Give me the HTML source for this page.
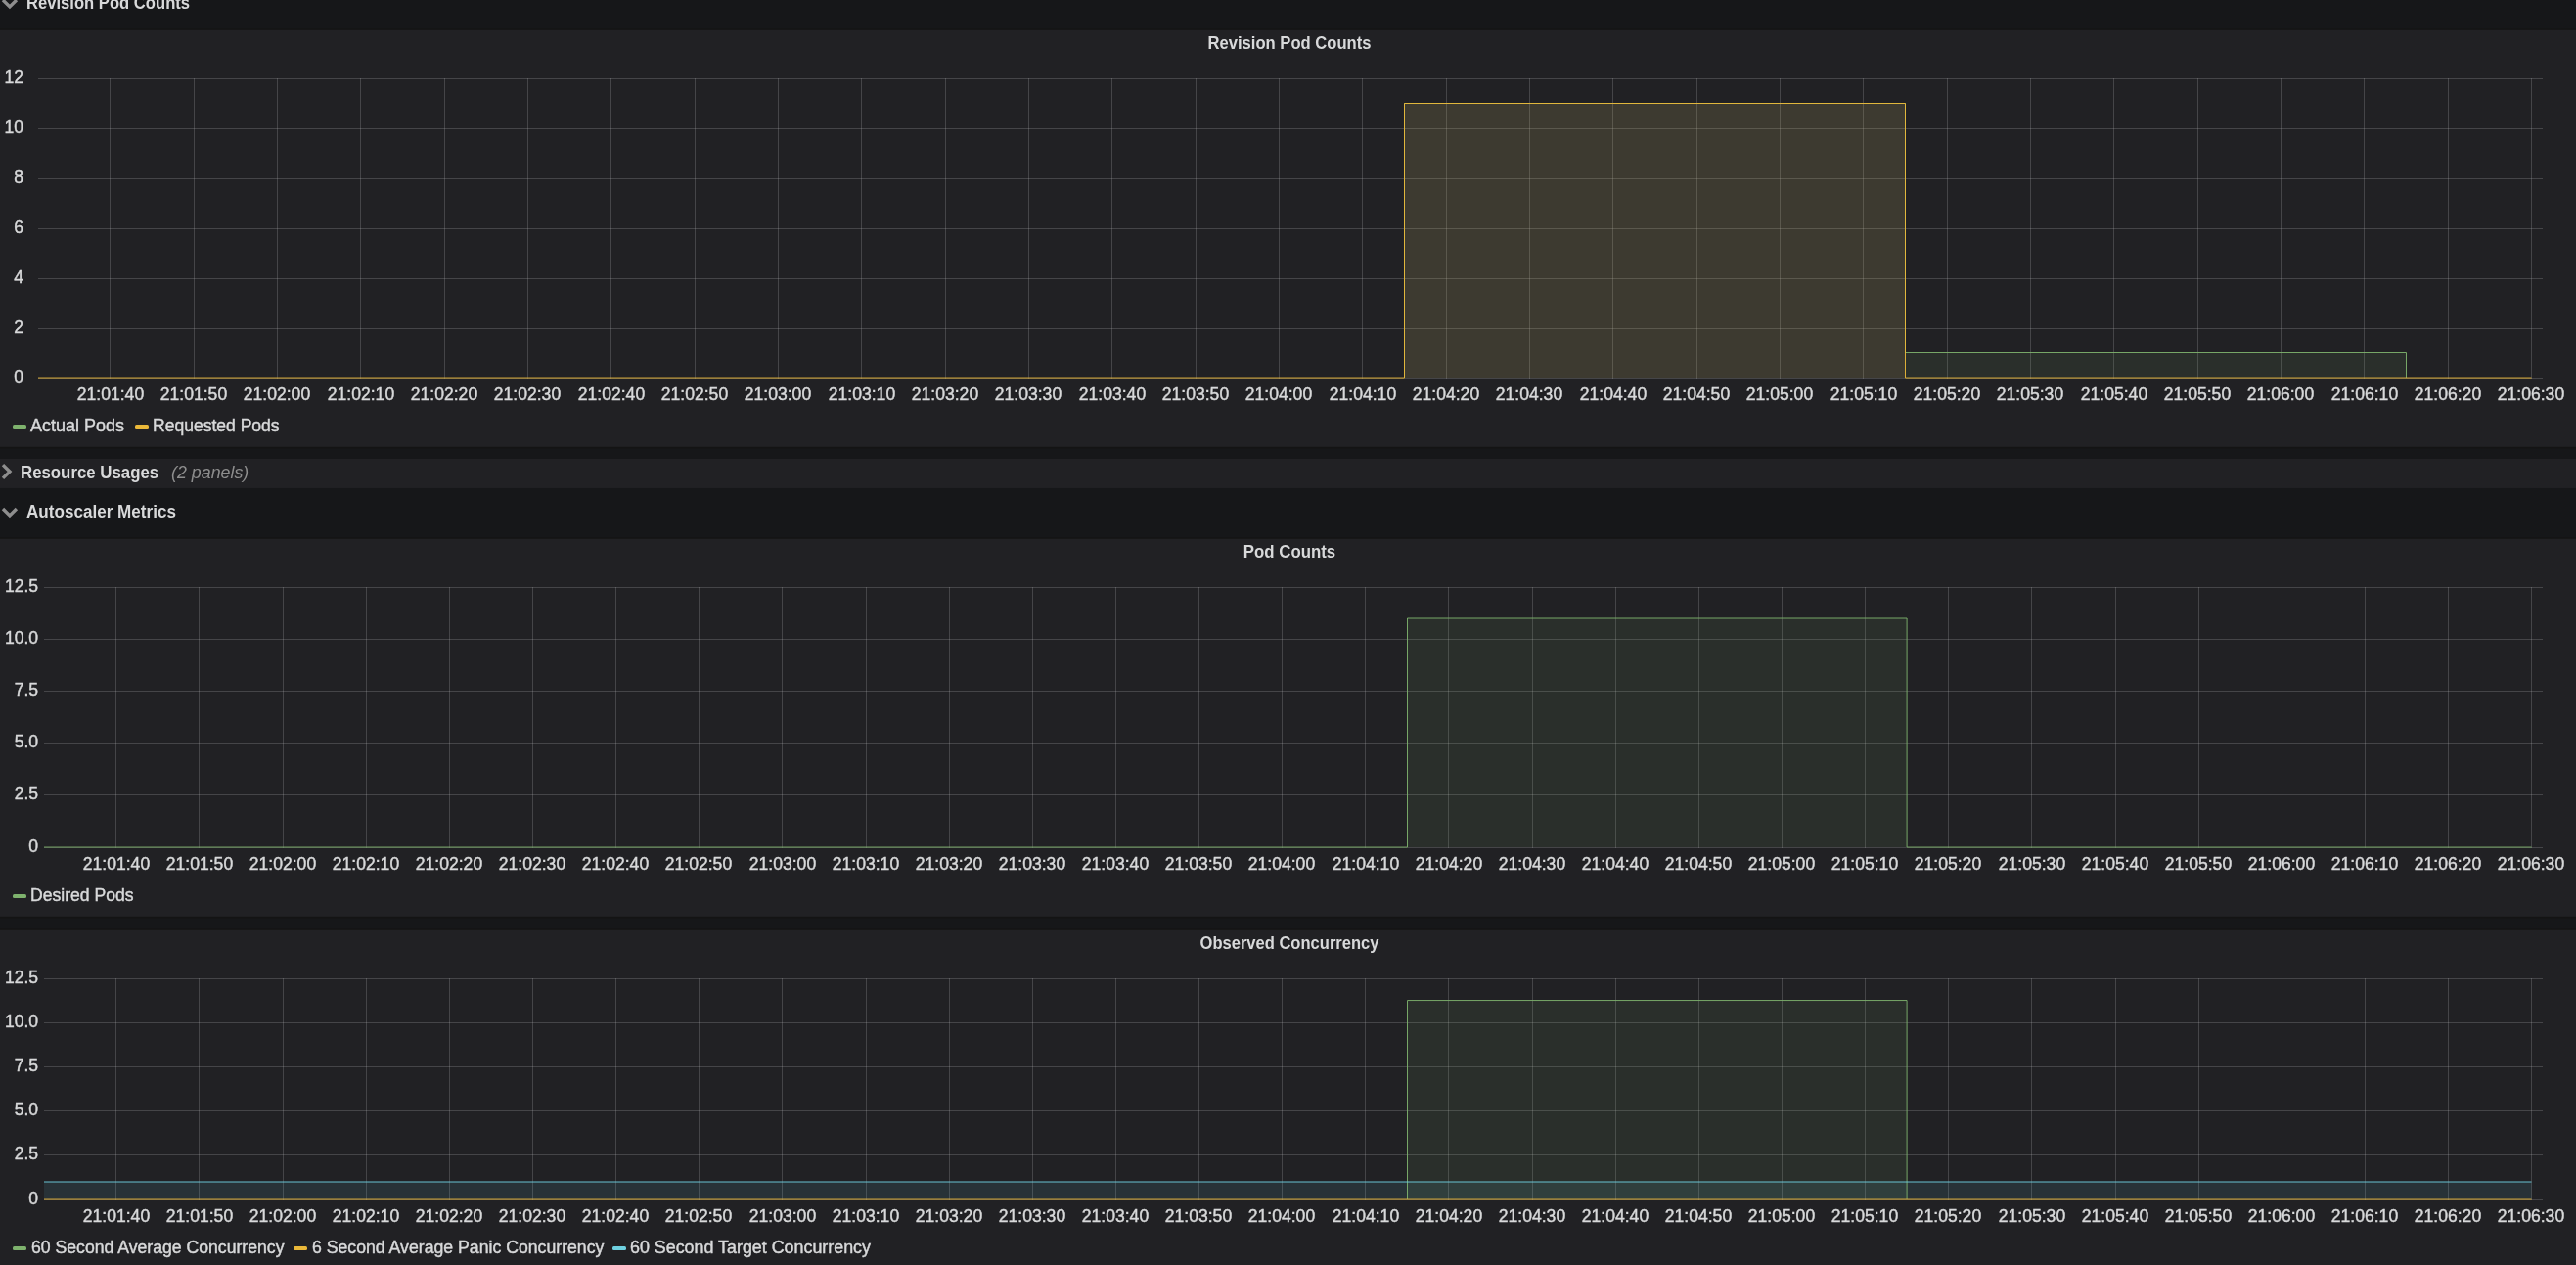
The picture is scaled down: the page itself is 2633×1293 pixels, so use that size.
<!DOCTYPE html>
<html lang="en"><head><meta charset="utf-8"><title>Knative Serving - Scaling Debugging</title>
<style>
html,body{margin:0;padding:0;background:#161719;}
html{width:2633px;height:1293px;overflow:hidden;}
body{width:2633px;height:1293px;position:relative;overflow:hidden;font-family:"Liberation Sans",sans-serif;font-size:18px;color:#d8d9da;}
.panel{position:absolute;left:0;width:2633px;background:#212124;}
.t{position:absolute;white-space:nowrap;line-height:18px;height:18px;}
#txt{position:absolute;left:0;top:0;width:2633px;height:1293px;will-change:transform;overflow:hidden;}
.n{-webkit-text-stroke:0.45px #d8d9da;}
.b{font-weight:bold;}
.i{font-style:italic;}
.ch{position:absolute;left:0;top:0;}
.dash{position:absolute;width:14px;height:4px;border-radius:1.5px;}
.ic{position:absolute;left:0;}
</style></head><body>
<svg class="ch" width="2633" height="1293" viewBox="0 0 2633 1293"><rect x="-2" y="29.40" width="2637" height="429.05" fill="#141414"/><rect x="-2" y="30.80" width="2637" height="426.05" fill="#212124"/><rect x="-2" y="469.00" width="2637" height="29.95" fill="#212124"/><rect x="-2" y="549.30" width="2637" height="389.15" fill="#141414"/><rect x="-2" y="550.70" width="2637" height="386.15" fill="#212124"/><rect x="-2" y="949.30" width="2637" height="352.30" fill="#141414"/><rect x="-2" y="950.70" width="2637" height="349.30" fill="#212124"/></svg>
<svg class="ic" style="top:0" width="24" height="1293" viewBox="0 0 24 1293"><polyline points="2.98,0.00 9.94,6.90 16.9,0.00" fill="none" stroke="#8e8e8e" stroke-width="3.4" stroke-linejoin="miter"/></svg>
<svg class="ic" style="top:0" width="24" height="1293" viewBox="0 0 24 1293"><polyline points="2.98,475.10 9.97,482.00 2.98,488.90" fill="none" stroke="#8e8e8e" stroke-width="3.4" stroke-linejoin="miter"/></svg>
<svg class="ic" style="top:0" width="24" height="1293" viewBox="0 0 24 1293"><polyline points="2.98,520.00 9.94,526.90 16.9,520.00" fill="none" stroke="#8e8e8e" stroke-width="3.4" stroke-linejoin="miter"/></svg>
<svg class="ch" width="2633" height="1293" viewBox="0 0 2633 1293">
<g stroke="rgba(200,200,200,0.22)" stroke-width="1" shape-rendering="crispEdges"><line x1="39" x2="2599" y1="80.5" y2="80.5"/><line x1="39" x2="2599" y1="131.5" y2="131.5"/><line x1="39" x2="2599" y1="182.5" y2="182.5"/><line x1="39" x2="2599" y1="233.5" y2="233.5"/><line x1="39" x2="2599" y1="284.5" y2="284.5"/><line x1="39" x2="2599" y1="335.5" y2="335.5"/><line x1="39" x2="2599" y1="386.5" y2="386.5"/><line x1="112.5" x2="112.5" y1="80" y2="387"/><line x1="198.5" x2="198.5" y1="80" y2="387"/><line x1="283.5" x2="283.5" y1="80" y2="387"/><line x1="368.5" x2="368.5" y1="80" y2="387"/><line x1="454.5" x2="454.5" y1="80" y2="387"/><line x1="539.5" x2="539.5" y1="80" y2="387"/><line x1="624.5" x2="624.5" y1="80" y2="387"/><line x1="710.5" x2="710.5" y1="80" y2="387"/><line x1="795.5" x2="795.5" y1="80" y2="387"/><line x1="880.5" x2="880.5" y1="80" y2="387"/><line x1="966.5" x2="966.5" y1="80" y2="387"/><line x1="1051.5" x2="1051.5" y1="80" y2="387"/><line x1="1136.5" x2="1136.5" y1="80" y2="387"/><line x1="1222.5" x2="1222.5" y1="80" y2="387"/><line x1="1307.5" x2="1307.5" y1="80" y2="387"/><line x1="1392.5" x2="1392.5" y1="80" y2="387"/><line x1="1478.5" x2="1478.5" y1="80" y2="387"/><line x1="1563.5" x2="1563.5" y1="80" y2="387"/><line x1="1648.5" x2="1648.5" y1="80" y2="387"/><line x1="1734.5" x2="1734.5" y1="80" y2="387"/><line x1="1819.5" x2="1819.5" y1="80" y2="387"/><line x1="1904.5" x2="1904.5" y1="80" y2="387"/><line x1="1990.5" x2="1990.5" y1="80" y2="387"/><line x1="2075.5" x2="2075.5" y1="80" y2="387"/><line x1="2160.5" x2="2160.5" y1="80" y2="387"/><line x1="2246.5" x2="2246.5" y1="80" y2="387"/><line x1="2331.5" x2="2331.5" y1="80" y2="387"/><line x1="2416.5" x2="2416.5" y1="80" y2="387"/><line x1="2502.5" x2="2502.5" y1="80" y2="387"/><line x1="2587.5" x2="2587.5" y1="80" y2="387"/></g>
<rect x="1435.5" y="105.5" width="512.0" height="280.55" fill="rgb(186,170,99)" fill-opacity="0.19"/><rect x="1947.5" y="360.5" width="512.0" height="25.55" fill="#7eb26d" fill-opacity="0.1"/><path d="M1435.50 386.05 L1435.50 105.50 L1947.50 105.50 L1947.50 360.50 L2459.50 360.50 L2459.50 386.05" fill="none" stroke="#7eb26d" stroke-width="1.0" stroke-opacity="0.93" stroke-linejoin="miter"/><path d="M39.00 386.05 L1435.50 386.05 L1435.50 105.50 L1947.50 105.50 L1947.50 386.05 L2587.50 386.05" fill="none" stroke="#eab839" stroke-width="1.0" stroke-opacity="0.93" stroke-linejoin="miter"/>
</svg>
<div class="dash" style="left:13.00px;top:433.80px;background:#7eb26d"></div>
<div class="dash" style="left:137.50px;top:433.80px;background:#eab839"></div>
<svg class="ch" width="2633" height="1293" viewBox="0 0 2633 1293">
<g stroke="rgba(200,200,200,0.22)" stroke-width="1" shape-rendering="crispEdges"><line x1="45" x2="2599" y1="600.5" y2="600.5"/><line x1="45" x2="2599" y1="653.5" y2="653.5"/><line x1="45" x2="2599" y1="706.5" y2="706.5"/><line x1="45" x2="2599" y1="759.5" y2="759.5"/><line x1="45" x2="2599" y1="812.5" y2="812.5"/><line x1="45" x2="2599" y1="866.5" y2="866.5"/><line x1="118.5" x2="118.5" y1="600" y2="867"/><line x1="203.5" x2="203.5" y1="600" y2="867"/><line x1="289.5" x2="289.5" y1="600" y2="867"/><line x1="374.5" x2="374.5" y1="600" y2="867"/><line x1="459.5" x2="459.5" y1="600" y2="867"/><line x1="544.5" x2="544.5" y1="600" y2="867"/><line x1="629.5" x2="629.5" y1="600" y2="867"/><line x1="714.5" x2="714.5" y1="600" y2="867"/><line x1="799.5" x2="799.5" y1="600" y2="867"/><line x1="885.5" x2="885.5" y1="600" y2="867"/><line x1="970.5" x2="970.5" y1="600" y2="867"/><line x1="1055.5" x2="1055.5" y1="600" y2="867"/><line x1="1140.5" x2="1140.5" y1="600" y2="867"/><line x1="1225.5" x2="1225.5" y1="600" y2="867"/><line x1="1310.5" x2="1310.5" y1="600" y2="867"/><line x1="1395.5" x2="1395.5" y1="600" y2="867"/><line x1="1480.5" x2="1480.5" y1="600" y2="867"/><line x1="1566.5" x2="1566.5" y1="600" y2="867"/><line x1="1651.5" x2="1651.5" y1="600" y2="867"/><line x1="1736.5" x2="1736.5" y1="600" y2="867"/><line x1="1821.5" x2="1821.5" y1="600" y2="867"/><line x1="1906.5" x2="1906.5" y1="600" y2="867"/><line x1="1991.5" x2="1991.5" y1="600" y2="867"/><line x1="2076.5" x2="2076.5" y1="600" y2="867"/><line x1="2162.5" x2="2162.5" y1="600" y2="867"/><line x1="2247.5" x2="2247.5" y1="600" y2="867"/><line x1="2332.5" x2="2332.5" y1="600" y2="867"/><line x1="2417.5" x2="2417.5" y1="600" y2="867"/><line x1="2502.5" x2="2502.5" y1="600" y2="867"/><line x1="2587.5" x2="2587.5" y1="600" y2="867"/></g>
<path d="M45.00 866.05 L1438.50 866.05 L1438.50 632.00 L1949.10 632.00 L1949.10 866.05 L2587.50 866.05 L2587.50 866.05 L45.00 866.05 Z" fill="#7eb26d" fill-opacity="0.1" stroke="none"/><path d="M45.00 866.05 L1438.50 866.05 L1438.50 632.00 L1949.10 632.00 L1949.10 866.05 L2587.50 866.05" fill="none" stroke="#7eb26d" stroke-width="1.0" stroke-opacity="0.93" stroke-linejoin="miter"/>
</svg>
<div class="dash" style="left:13.00px;top:913.80px;background:#7eb26d"></div>
<svg class="ch" width="2633" height="1293" viewBox="0 0 2633 1293">
<g stroke="rgba(200,200,200,0.22)" stroke-width="1" shape-rendering="crispEdges"><line x1="45" x2="2599" y1="1000.5" y2="1000.5"/><line x1="45" x2="2599" y1="1045.5" y2="1045.5"/><line x1="45" x2="2599" y1="1090.5" y2="1090.5"/><line x1="45" x2="2599" y1="1135.5" y2="1135.5"/><line x1="45" x2="2599" y1="1180.5" y2="1180.5"/><line x1="45" x2="2599" y1="1226.5" y2="1226.5"/><line x1="118.5" x2="118.5" y1="1000" y2="1227"/><line x1="203.5" x2="203.5" y1="1000" y2="1227"/><line x1="289.5" x2="289.5" y1="1000" y2="1227"/><line x1="374.5" x2="374.5" y1="1000" y2="1227"/><line x1="459.5" x2="459.5" y1="1000" y2="1227"/><line x1="544.5" x2="544.5" y1="1000" y2="1227"/><line x1="629.5" x2="629.5" y1="1000" y2="1227"/><line x1="714.5" x2="714.5" y1="1000" y2="1227"/><line x1="799.5" x2="799.5" y1="1000" y2="1227"/><line x1="885.5" x2="885.5" y1="1000" y2="1227"/><line x1="970.5" x2="970.5" y1="1000" y2="1227"/><line x1="1055.5" x2="1055.5" y1="1000" y2="1227"/><line x1="1140.5" x2="1140.5" y1="1000" y2="1227"/><line x1="1225.5" x2="1225.5" y1="1000" y2="1227"/><line x1="1310.5" x2="1310.5" y1="1000" y2="1227"/><line x1="1395.5" x2="1395.5" y1="1000" y2="1227"/><line x1="1480.5" x2="1480.5" y1="1000" y2="1227"/><line x1="1566.5" x2="1566.5" y1="1000" y2="1227"/><line x1="1651.5" x2="1651.5" y1="1000" y2="1227"/><line x1="1736.5" x2="1736.5" y1="1000" y2="1227"/><line x1="1821.5" x2="1821.5" y1="1000" y2="1227"/><line x1="1906.5" x2="1906.5" y1="1000" y2="1227"/><line x1="1991.5" x2="1991.5" y1="1000" y2="1227"/><line x1="2076.5" x2="2076.5" y1="1000" y2="1227"/><line x1="2162.5" x2="2162.5" y1="1000" y2="1227"/><line x1="2247.5" x2="2247.5" y1="1000" y2="1227"/><line x1="2332.5" x2="2332.5" y1="1000" y2="1227"/><line x1="2417.5" x2="2417.5" y1="1000" y2="1227"/><line x1="2502.5" x2="2502.5" y1="1000" y2="1227"/><line x1="2587.5" x2="2587.5" y1="1000" y2="1227"/></g>
<path d="M1438.50 1226.05 L1438.50 1022.55 L1949.10 1022.55 L1949.10 1226.05 L1949.10 1226.05 L1438.50 1226.05 Z" fill="#7eb26d" fill-opacity="0.1" stroke="none"/><path d="M45.00 1208.00 L2587.50 1208.00 L2587.50 1226.05 L45.00 1226.05 Z" fill="#6ed0e0" fill-opacity="0.1" stroke="none"/><path d="M1438.50 1226.05 L1438.50 1022.55 L1949.10 1022.55 L1949.10 1226.05" fill="none" stroke="#7eb26d" stroke-width="1.0" stroke-opacity="0.93" stroke-linejoin="miter"/><path d="M45.00 1226.05 L2587.50 1226.05" fill="none" stroke="#eab839" stroke-width="1.0" stroke-opacity="0.93" stroke-linejoin="miter"/><path d="M45.00 1208.00 L2587.50 1208.00" fill="none" stroke="#6ed0e0" stroke-width="1.0" stroke-opacity="0.93" stroke-linejoin="miter"/>
</svg>
<div class="dash" style="left:13.00px;top:1273.80px;background:#7eb26d"></div>
<div class="dash" style="left:300.00px;top:1273.80px;background:#eab839"></div>
<div class="dash" style="left:626.25px;top:1273.80px;background:#6ed0e0"></div>
<div id="txt">
<div id="r1" class="t b" style="top:-6.24px;left:26.50px;transform-origin:0 0;transform:scaleX(0.9230);"><span>Revision Pod Counts</span></div>
<div id="r2" class="t b" style="top:473.56px;left:21.30px;transform-origin:0 0;transform:scaleX(0.9342);"><span>Resource Usages</span></div>
<div id="r2c" class="t i" style="top:473.56px;left:174.61px;transform-origin:0 0;transform:scaleX(0.9902);color:#8e8e8e;"><span>(2 panels)</span></div>
<div id="r3" class="t b" style="top:513.76px;left:26.73px;transform-origin:0 0;transform:scaleX(0.9496);"><span>Autoscaler Metrics</span></div>
<div id="p1" class="t b" style="top:34.76px;left:1217.88px;width:200px;text-align:center;transform:scaleX(0.9228);"><span>Revision Pod Counts</span></div>
<div id="p2" class="t b" style="top:554.76px;left:1218.25px;width:200px;text-align:center;transform:scaleX(0.9344);"><span>Pod Counts</span></div>
<div id="p3" class="t b" style="top:954.76px;left:1217.64px;width:200px;text-align:center;transform:scaleX(0.9188);"><span>Observed Concurrency</span></div>
<div class="t n" style="top:69.66px;right:2609.00px;transform-origin:100% 0;transform:scaleX(0.9750);"><span>12</span></div>
<div class="t n" style="top:120.66px;right:2609.00px;transform-origin:100% 0;transform:scaleX(0.9750);"><span>10</span></div>
<div class="t n" style="top:171.66px;right:2609.00px;transform-origin:100% 0;transform:scaleX(0.9750);"><span>8</span></div>
<div class="t n" style="top:222.66px;right:2609.00px;transform-origin:100% 0;transform:scaleX(0.9750);"><span>6</span></div>
<div class="t n" style="top:273.66px;right:2609.00px;transform-origin:100% 0;transform:scaleX(0.9750);"><span>4</span></div>
<div class="t n" style="top:324.66px;right:2609.00px;transform-origin:100% 0;transform:scaleX(0.9750);"><span>2</span></div>
<div class="t n" style="top:375.66px;right:2609.00px;transform-origin:100% 0;transform:scaleX(0.9750);"><span>0</span></div>
<div class="t n" style="top:394.16px;left:12.65px;width:200px;text-align:center;transform:scaleX(0.9750);"><span>21:01:40</span></div>
<div class="t n" style="top:394.16px;left:97.98px;width:200px;text-align:center;transform:scaleX(0.9750);"><span>21:01:50</span></div>
<div class="t n" style="top:394.16px;left:183.32px;width:200px;text-align:center;transform:scaleX(0.9750);"><span>21:02:00</span></div>
<div class="t n" style="top:394.16px;left:268.65px;width:200px;text-align:center;transform:scaleX(0.9750);"><span>21:02:10</span></div>
<div class="t n" style="top:394.16px;left:353.98px;width:200px;text-align:center;transform:scaleX(0.9750);"><span>21:02:20</span></div>
<div class="t n" style="top:394.16px;left:439.32px;width:200px;text-align:center;transform:scaleX(0.9750);"><span>21:02:30</span></div>
<div class="t n" style="top:394.16px;left:524.65px;width:200px;text-align:center;transform:scaleX(0.9750);"><span>21:02:40</span></div>
<div class="t n" style="top:394.16px;left:609.98px;width:200px;text-align:center;transform:scaleX(0.9750);"><span>21:02:50</span></div>
<div class="t n" style="top:394.16px;left:695.32px;width:200px;text-align:center;transform:scaleX(0.9750);"><span>21:03:00</span></div>
<div class="t n" style="top:394.16px;left:780.65px;width:200px;text-align:center;transform:scaleX(0.9750);"><span>21:03:10</span></div>
<div class="t n" style="top:394.16px;left:865.98px;width:200px;text-align:center;transform:scaleX(0.9750);"><span>21:03:20</span></div>
<div class="t n" style="top:394.16px;left:951.32px;width:200px;text-align:center;transform:scaleX(0.9750);"><span>21:03:30</span></div>
<div class="t n" style="top:394.16px;left:1036.65px;width:200px;text-align:center;transform:scaleX(0.9750);"><span>21:03:40</span></div>
<div class="t n" style="top:394.16px;left:1121.98px;width:200px;text-align:center;transform:scaleX(0.9750);"><span>21:03:50</span></div>
<div class="t n" style="top:394.16px;left:1207.32px;width:200px;text-align:center;transform:scaleX(0.9750);"><span>21:04:00</span></div>
<div class="t n" style="top:394.16px;left:1292.65px;width:200px;text-align:center;transform:scaleX(0.9750);"><span>21:04:10</span></div>
<div class="t n" style="top:394.16px;left:1377.98px;width:200px;text-align:center;transform:scaleX(0.9750);"><span>21:04:20</span></div>
<div class="t n" style="top:394.16px;left:1463.32px;width:200px;text-align:center;transform:scaleX(0.9750);"><span>21:04:30</span></div>
<div class="t n" style="top:394.16px;left:1548.65px;width:200px;text-align:center;transform:scaleX(0.9750);"><span>21:04:40</span></div>
<div class="t n" style="top:394.16px;left:1633.98px;width:200px;text-align:center;transform:scaleX(0.9750);"><span>21:04:50</span></div>
<div class="t n" style="top:394.16px;left:1719.32px;width:200px;text-align:center;transform:scaleX(0.9750);"><span>21:05:00</span></div>
<div class="t n" style="top:394.16px;left:1804.65px;width:200px;text-align:center;transform:scaleX(0.9750);"><span>21:05:10</span></div>
<div class="t n" style="top:394.16px;left:1889.98px;width:200px;text-align:center;transform:scaleX(0.9750);"><span>21:05:20</span></div>
<div class="t n" style="top:394.16px;left:1975.32px;width:200px;text-align:center;transform:scaleX(0.9750);"><span>21:05:30</span></div>
<div class="t n" style="top:394.16px;left:2060.65px;width:200px;text-align:center;transform:scaleX(0.9750);"><span>21:05:40</span></div>
<div class="t n" style="top:394.16px;left:2145.98px;width:200px;text-align:center;transform:scaleX(0.9750);"><span>21:05:50</span></div>
<div class="t n" style="top:394.16px;left:2231.32px;width:200px;text-align:center;transform:scaleX(0.9750);"><span>21:06:00</span></div>
<div class="t n" style="top:394.16px;left:2316.65px;width:200px;text-align:center;transform:scaleX(0.9750);"><span>21:06:10</span></div>
<div class="t n" style="top:394.16px;left:2401.98px;width:200px;text-align:center;transform:scaleX(0.9750);"><span>21:06:20</span></div>
<div class="t n" style="top:394.16px;left:2487.32px;width:200px;text-align:center;transform:scaleX(0.9750);"><span>21:06:30</span></div>
<div id="lg1_0" class="t n" style="top:425.96px;left:31.25px;transform-origin:0 0;transform:scaleX(0.9980);"><span>Actual Pods</span></div>
<div id="lg1_1" class="t n" style="top:425.96px;left:156.35px;transform-origin:0 0;transform:scaleX(0.9738);"><span>Requested Pods</span></div>
<div class="t n" style="top:589.66px;right:2594.40px;transform-origin:100% 0;transform:scaleX(0.9750);"><span>12.5</span></div>
<div class="t n" style="top:642.86px;right:2594.40px;transform-origin:100% 0;transform:scaleX(0.9750);"><span>10.0</span></div>
<div class="t n" style="top:696.06px;right:2594.40px;transform-origin:100% 0;transform:scaleX(0.9750);"><span>7.5</span></div>
<div class="t n" style="top:749.26px;right:2594.40px;transform-origin:100% 0;transform:scaleX(0.9750);"><span>5.0</span></div>
<div class="t n" style="top:802.46px;right:2594.40px;transform-origin:100% 0;transform:scaleX(0.9750);"><span>2.5</span></div>
<div class="t n" style="top:855.66px;right:2594.40px;transform-origin:100% 0;transform:scaleX(0.9750);"><span>0</span></div>
<div class="t n" style="top:874.16px;left:18.50px;width:200px;text-align:center;transform:scaleX(0.9750);"><span>21:01:40</span></div>
<div class="t n" style="top:874.16px;left:103.63px;width:200px;text-align:center;transform:scaleX(0.9750);"><span>21:01:50</span></div>
<div class="t n" style="top:874.16px;left:188.77px;width:200px;text-align:center;transform:scaleX(0.9750);"><span>21:02:00</span></div>
<div class="t n" style="top:874.16px;left:273.90px;width:200px;text-align:center;transform:scaleX(0.9750);"><span>21:02:10</span></div>
<div class="t n" style="top:874.16px;left:359.03px;width:200px;text-align:center;transform:scaleX(0.9750);"><span>21:02:20</span></div>
<div class="t n" style="top:874.16px;left:444.17px;width:200px;text-align:center;transform:scaleX(0.9750);"><span>21:02:30</span></div>
<div class="t n" style="top:874.16px;left:529.30px;width:200px;text-align:center;transform:scaleX(0.9750);"><span>21:02:40</span></div>
<div class="t n" style="top:874.16px;left:614.43px;width:200px;text-align:center;transform:scaleX(0.9750);"><span>21:02:50</span></div>
<div class="t n" style="top:874.16px;left:699.57px;width:200px;text-align:center;transform:scaleX(0.9750);"><span>21:03:00</span></div>
<div class="t n" style="top:874.16px;left:784.70px;width:200px;text-align:center;transform:scaleX(0.9750);"><span>21:03:10</span></div>
<div class="t n" style="top:874.16px;left:869.83px;width:200px;text-align:center;transform:scaleX(0.9750);"><span>21:03:20</span></div>
<div class="t n" style="top:874.16px;left:954.97px;width:200px;text-align:center;transform:scaleX(0.9750);"><span>21:03:30</span></div>
<div class="t n" style="top:874.16px;left:1040.10px;width:200px;text-align:center;transform:scaleX(0.9750);"><span>21:03:40</span></div>
<div class="t n" style="top:874.16px;left:1125.23px;width:200px;text-align:center;transform:scaleX(0.9750);"><span>21:03:50</span></div>
<div class="t n" style="top:874.16px;left:1210.37px;width:200px;text-align:center;transform:scaleX(0.9750);"><span>21:04:00</span></div>
<div class="t n" style="top:874.16px;left:1295.50px;width:200px;text-align:center;transform:scaleX(0.9750);"><span>21:04:10</span></div>
<div class="t n" style="top:874.16px;left:1380.63px;width:200px;text-align:center;transform:scaleX(0.9750);"><span>21:04:20</span></div>
<div class="t n" style="top:874.16px;left:1465.77px;width:200px;text-align:center;transform:scaleX(0.9750);"><span>21:04:30</span></div>
<div class="t n" style="top:874.16px;left:1550.90px;width:200px;text-align:center;transform:scaleX(0.9750);"><span>21:04:40</span></div>
<div class="t n" style="top:874.16px;left:1636.03px;width:200px;text-align:center;transform:scaleX(0.9750);"><span>21:04:50</span></div>
<div class="t n" style="top:874.16px;left:1721.17px;width:200px;text-align:center;transform:scaleX(0.9750);"><span>21:05:00</span></div>
<div class="t n" style="top:874.16px;left:1806.30px;width:200px;text-align:center;transform:scaleX(0.9750);"><span>21:05:10</span></div>
<div class="t n" style="top:874.16px;left:1891.43px;width:200px;text-align:center;transform:scaleX(0.9750);"><span>21:05:20</span></div>
<div class="t n" style="top:874.16px;left:1976.57px;width:200px;text-align:center;transform:scaleX(0.9750);"><span>21:05:30</span></div>
<div class="t n" style="top:874.16px;left:2061.70px;width:200px;text-align:center;transform:scaleX(0.9750);"><span>21:05:40</span></div>
<div class="t n" style="top:874.16px;left:2146.83px;width:200px;text-align:center;transform:scaleX(0.9750);"><span>21:05:50</span></div>
<div class="t n" style="top:874.16px;left:2231.97px;width:200px;text-align:center;transform:scaleX(0.9750);"><span>21:06:00</span></div>
<div class="t n" style="top:874.16px;left:2317.10px;width:200px;text-align:center;transform:scaleX(0.9750);"><span>21:06:10</span></div>
<div class="t n" style="top:874.16px;left:2402.23px;width:200px;text-align:center;transform:scaleX(0.9750);"><span>21:06:20</span></div>
<div class="t n" style="top:874.16px;left:2487.37px;width:200px;text-align:center;transform:scaleX(0.9750);"><span>21:06:30</span></div>
<div id="lg2_0" class="t n" style="top:905.96px;left:31.35px;transform-origin:0 0;transform:scaleX(0.9760);"><span>Desired Pods</span></div>
<div class="t n" style="top:989.66px;right:2594.40px;transform-origin:100% 0;transform:scaleX(0.9750);"><span>12.5</span></div>
<div class="t n" style="top:1034.86px;right:2594.40px;transform-origin:100% 0;transform:scaleX(0.9750);"><span>10.0</span></div>
<div class="t n" style="top:1080.06px;right:2594.40px;transform-origin:100% 0;transform:scaleX(0.9750);"><span>7.5</span></div>
<div class="t n" style="top:1125.26px;right:2594.40px;transform-origin:100% 0;transform:scaleX(0.9750);"><span>5.0</span></div>
<div class="t n" style="top:1170.46px;right:2594.40px;transform-origin:100% 0;transform:scaleX(0.9750);"><span>2.5</span></div>
<div class="t n" style="top:1215.66px;right:2594.40px;transform-origin:100% 0;transform:scaleX(0.9750);"><span>0</span></div>
<div class="t n" style="top:1234.16px;left:18.50px;width:200px;text-align:center;transform:scaleX(0.9750);"><span>21:01:40</span></div>
<div class="t n" style="top:1234.16px;left:103.63px;width:200px;text-align:center;transform:scaleX(0.9750);"><span>21:01:50</span></div>
<div class="t n" style="top:1234.16px;left:188.77px;width:200px;text-align:center;transform:scaleX(0.9750);"><span>21:02:00</span></div>
<div class="t n" style="top:1234.16px;left:273.90px;width:200px;text-align:center;transform:scaleX(0.9750);"><span>21:02:10</span></div>
<div class="t n" style="top:1234.16px;left:359.03px;width:200px;text-align:center;transform:scaleX(0.9750);"><span>21:02:20</span></div>
<div class="t n" style="top:1234.16px;left:444.17px;width:200px;text-align:center;transform:scaleX(0.9750);"><span>21:02:30</span></div>
<div class="t n" style="top:1234.16px;left:529.30px;width:200px;text-align:center;transform:scaleX(0.9750);"><span>21:02:40</span></div>
<div class="t n" style="top:1234.16px;left:614.43px;width:200px;text-align:center;transform:scaleX(0.9750);"><span>21:02:50</span></div>
<div class="t n" style="top:1234.16px;left:699.57px;width:200px;text-align:center;transform:scaleX(0.9750);"><span>21:03:00</span></div>
<div class="t n" style="top:1234.16px;left:784.70px;width:200px;text-align:center;transform:scaleX(0.9750);"><span>21:03:10</span></div>
<div class="t n" style="top:1234.16px;left:869.83px;width:200px;text-align:center;transform:scaleX(0.9750);"><span>21:03:20</span></div>
<div class="t n" style="top:1234.16px;left:954.97px;width:200px;text-align:center;transform:scaleX(0.9750);"><span>21:03:30</span></div>
<div class="t n" style="top:1234.16px;left:1040.10px;width:200px;text-align:center;transform:scaleX(0.9750);"><span>21:03:40</span></div>
<div class="t n" style="top:1234.16px;left:1125.23px;width:200px;text-align:center;transform:scaleX(0.9750);"><span>21:03:50</span></div>
<div class="t n" style="top:1234.16px;left:1210.37px;width:200px;text-align:center;transform:scaleX(0.9750);"><span>21:04:00</span></div>
<div class="t n" style="top:1234.16px;left:1295.50px;width:200px;text-align:center;transform:scaleX(0.9750);"><span>21:04:10</span></div>
<div class="t n" style="top:1234.16px;left:1380.63px;width:200px;text-align:center;transform:scaleX(0.9750);"><span>21:04:20</span></div>
<div class="t n" style="top:1234.16px;left:1465.77px;width:200px;text-align:center;transform:scaleX(0.9750);"><span>21:04:30</span></div>
<div class="t n" style="top:1234.16px;left:1550.90px;width:200px;text-align:center;transform:scaleX(0.9750);"><span>21:04:40</span></div>
<div class="t n" style="top:1234.16px;left:1636.03px;width:200px;text-align:center;transform:scaleX(0.9750);"><span>21:04:50</span></div>
<div class="t n" style="top:1234.16px;left:1721.17px;width:200px;text-align:center;transform:scaleX(0.9750);"><span>21:05:00</span></div>
<div class="t n" style="top:1234.16px;left:1806.30px;width:200px;text-align:center;transform:scaleX(0.9750);"><span>21:05:10</span></div>
<div class="t n" style="top:1234.16px;left:1891.43px;width:200px;text-align:center;transform:scaleX(0.9750);"><span>21:05:20</span></div>
<div class="t n" style="top:1234.16px;left:1976.57px;width:200px;text-align:center;transform:scaleX(0.9750);"><span>21:05:30</span></div>
<div class="t n" style="top:1234.16px;left:2061.70px;width:200px;text-align:center;transform:scaleX(0.9750);"><span>21:05:40</span></div>
<div class="t n" style="top:1234.16px;left:2146.83px;width:200px;text-align:center;transform:scaleX(0.9750);"><span>21:05:50</span></div>
<div class="t n" style="top:1234.16px;left:2231.97px;width:200px;text-align:center;transform:scaleX(0.9750);"><span>21:06:00</span></div>
<div class="t n" style="top:1234.16px;left:2317.10px;width:200px;text-align:center;transform:scaleX(0.9750);"><span>21:06:10</span></div>
<div class="t n" style="top:1234.16px;left:2402.23px;width:200px;text-align:center;transform:scaleX(0.9750);"><span>21:06:20</span></div>
<div class="t n" style="top:1234.16px;left:2487.37px;width:200px;text-align:center;transform:scaleX(0.9750);"><span>21:06:30</span></div>
<div id="lg3_0" class="t n" style="top:1265.96px;left:32.08px;transform-origin:0 0;transform:scaleX(0.9797);"><span>60 Second Average Concurrency</span></div>
<div id="lg3_1" class="t n" style="top:1265.96px;left:318.68px;transform-origin:0 0;transform:scaleX(0.9819);"><span>6 Second Average Panic Concurrency</span></div>
<div id="lg3_2" class="t n" style="top:1265.96px;left:643.77px;transform-origin:0 0;transform:scaleX(0.9926);"><span>60 Second Target Concurrency</span></div>
</div>
</body></html>
